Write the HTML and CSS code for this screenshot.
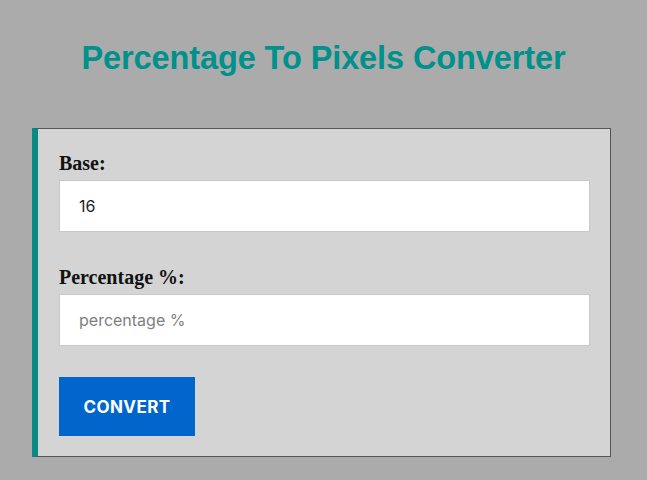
FILE: index.html
```html
<!DOCTYPE html>
<html>
<head>
<meta charset="utf-8">
<link rel="stylesheet" href="styles.css">
</head>
<body>
<h1 class="title">Percentage To Pixels Converter</h1>
<form class="card">
  <label class="label" for="base">Base:</label>
  <input class="field" id="base" type="text" value="16">
  <label class="label second" for="pct">Percentage %:</label>
  <input class="field" id="pct" type="text" placeholder="percentage %">
  <button class="btn" type="button">CONVERT</button>
</form>
</body>
</html>
```
FILE: styles.css
```css
html, body {
  margin: 0;
  padding: 0;
}
body {
  background: #ababab;
  font-family: Inter, "Liberation Sans", sans-serif;
  padding: 8px;
  height: 480px;
  box-sizing: border-box;
}
.title {
  font-family: "Liberation Sans", Arial, sans-serif;
  font-weight: bold;
  font-size: 32.5px;
  color: #00918c;
  text-align: center;
  margin: 32px 0 0 0;
  line-height: 37px;
  letter-spacing: -0.1px;
}
.card {
  display: flex;
  flex-direction: column;
  align-items: flex-start;
  box-sizing: border-box;
  width: 579px;
  margin: 51px 0 0 24px;
  background: #d4d4d4;
  border: 1px solid #555;
  border-left: 6px solid #0a8a85;
  padding: 23px 20px 20px 21px;
}
.label {
  font-family: "Liberation Serif", "Times New Roman", serif;
  font-weight: bold;
  font-size: 20px;
  line-height: 22px;
  color: #111;
  margin-bottom: 6px;
}
.label.second {
  margin-top: 34px;
}
.field {
  box-sizing: border-box;
  width: 100%;
  height: 52px;
  border: 1px solid #c8c8c8;
  background: #fff;
  padding: 0 19px;
  font-family: Inter, "Liberation Sans", sans-serif;
  font-size: 16px;
  color: #222;
  outline: none;
  margin: 0;
}
.field::placeholder {
  color: #808080;
}
.btn {
  margin-top: 31px;
  width: 136px;
  height: 59px;
  border: none;
  background: #0066cc;
  color: #fff;
  font-family: Inter, "Liberation Sans", sans-serif;
  font-weight: bold;
  font-size: 17px;
  letter-spacing: 0.4px;
  padding: 0;
}
```
